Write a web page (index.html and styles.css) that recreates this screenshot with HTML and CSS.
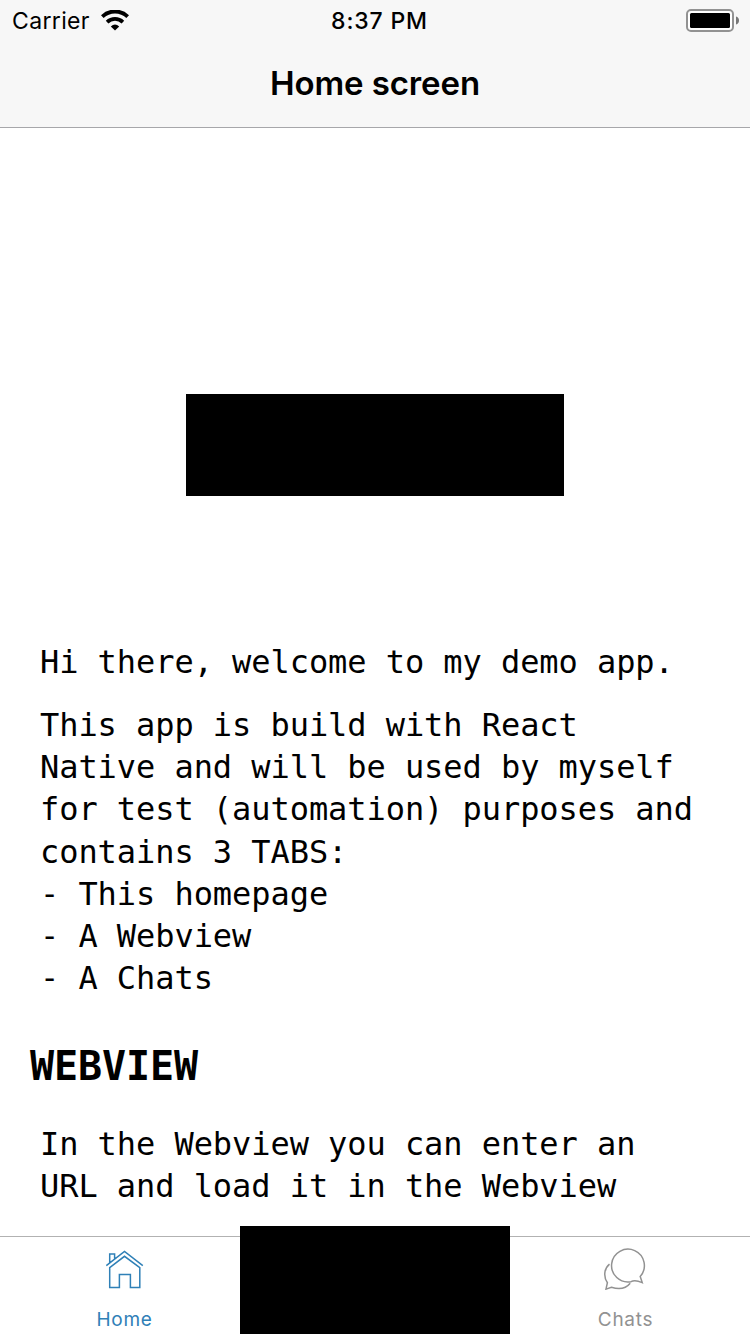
FILE: index.html
```html
<!DOCTYPE html>
<html lang="en">
<head>
<meta charset="utf-8">
<title>Home screen</title>
<link rel="stylesheet" href="styles.css">
</head>
<body>
<div class="app">
  <header class="header">
    <div class="status">
      <div class="carrier"><span>Carrier</span>
        <svg class="wifi" width="28" height="21" viewBox="0 0 28 21" fill="none" stroke="#000">
          <path d="M1.3 6.6A18.3 18.3 0 0 1 26.7 6.6" stroke-width="3.9"/>
          <path d="M6.1 12.1A11.5 11.5 0 0 1 21.9 12.1" stroke-width="3.8"/>
          <path d="M9.8 16.4Q14 12.8 18.2 16.4L14 20.5Z" fill="#000" stroke="none"/>
        </svg>
      </div>
      <time class="clock">8:37 PM</time>
      <svg class="battery" width="54" height="23" viewBox="0 0 54 23">
        <rect x="1" y="1" width="46" height="21" rx="4" fill="#fff" stroke="#929292" stroke-width="2"/>
        <rect x="4" y="4" width="40" height="15" rx="1.5"/>
        <path d="M50 7.5Q53 8.3 53 11.5T50 15.5Z" fill="#777"/>
      </svg>
    </div>
    <h1 class="title">Home screen</h1>
  </header>
  <main class="content">
    <div class="banner"></div>
    <p class="text intro">Hi there, welcome to my demo app.</p>
    <p class="text about">This app is build with React<br>Native and will be used by myself<br>for test (automation) purposes and<br>contains 3 TABS:<br>- This homepage<br>- A Webview<br>- A Chats</p>
    <h2 class="heading">WEBVIEW</h2>
    <p class="text">In the Webview you can enter an<br>URL and load it in the Webview</p>
  </main>
  <nav class="tabs">
    <a class="tab active">
      <svg width="40" height="42" viewBox="0.6 0 40 42" fill="none" stroke="currentColor" stroke-width="1.5">
        <path d="M1.9 17.6L20.1 3.4L38.4 17.6M5.3 14.4V6H10.2V10.6M5.3 19.6L20.1 8.3L35.4 19.6V39.4H26V26.4H15V39.4H5.3Z"/>
      </svg>
      <span>Home</span>
    </a>
    <div class="tab-block"></div>
    <a class="tab">
      <svg width="44" height="42" viewBox="0 -1.4 44 42" fill="none" stroke="currentColor" stroke-width="1.5">
        <path d="M38.2 33.2L36.2 27.1A16.4 16.4 0 1 0 27 32.3Q31 30.2 38.2 33.2Z"/>
        <path d="M5.5 14.7C-.3 19.5 -.5 27.8 3.4 33.3L2 39.7L7.4 37.8C15 40.2 22 39 26.2 33.8"/>
      </svg>
      <span>Chats</span>
    </a>
  </nav>
</div>
</body>
</html>
```
FILE: styles.css
```css
* { box-sizing: border-box; }
body { margin: 0; background: #fff; color: #000; font-family: Inter, "Liberation Sans", sans-serif; }
h1, h2, p { margin: 0; }
svg { display: block; flex: none; }
.app { width: 750px; height: 1334px; display: flex; flex-direction: column; overflow: hidden; }
.header { height: 128px; flex: none; background: #f7f7f7; border-bottom: 1px solid #a7a7aa; }
.status { height: 41px; display: grid; grid-template-columns: 1fr auto 1fr; align-items: center; padding: 0 10px 0 12px; }
.carrier { display: flex; align-items: center; gap: 11px; font-size: 23px; letter-spacing: .35px; line-height: 39px; }
.carrier span, .clock { padding-top: 2px; }
.carrier svg { margin-bottom: 1px; }
.clock { font-size: 23px; font-weight: 500; letter-spacing: .85px; line-height: 39px; padding-left: 7px; }
.battery { justify-self: end; }
.title { height: 86px; line-height: 85px; text-align: center; font-size: 33px; font-weight: 600; letter-spacing: -.1px; }
.content { flex: 1; min-height: 0; display: flex; flex-direction: column; padding: 266px 30px 0; font-family: "DejaVu Sans Mono", monospace; }
.banner { align-self: center; width: 378px; height: 102px; flex: none; margin-bottom: 145px; background: #000; }
.text { padding: 0 10px; font-size: 32px; line-height: 42.2px; letter-spacing: -.06px; white-space: nowrap; }
.intro { margin-bottom: 20.7px; }
.heading { margin: 41px 0 29.7px; font-size: 40px; line-height: 53px; font-weight: 700; letter-spacing: -.08px; }
.tabs { height: 98px; flex: none; display: grid; grid-template-columns: 240px 270px 240px; border-top: 1px solid #b2b2b2; background: #fff; }
.tab { display: flex; flex-direction: column; align-items: center; padding-top: 11px; color: #929292; font-size: 19px; line-height: 24px; letter-spacing: .7px; gap: 18px; }
.tab:first-child { padding-left: 9px; }
.tab:last-child { padding-right: 9px; }
.tab.active { color: #2f80b7; }
.tab-block { height: 108px; margin-top: -11px; background: #000; }
```
